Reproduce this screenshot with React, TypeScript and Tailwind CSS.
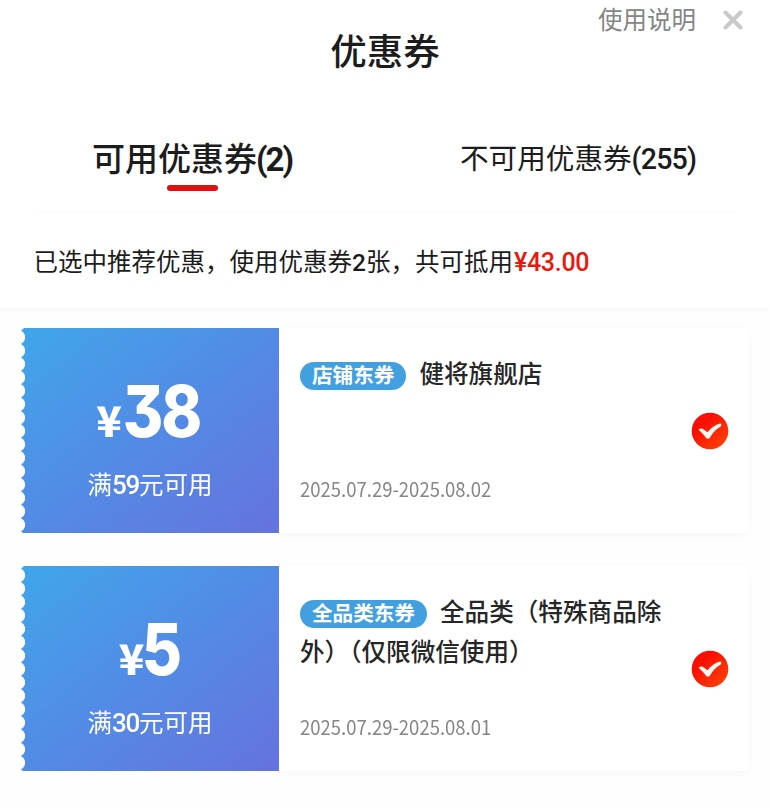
interface Coupon {
  id: number;
  amount: string;
  condition: string;
  tag: string;
  title: string;
  period: string;
}

const coupons: Coupon[] = [
  {
    id: 1,
    amount: '38',
    condition: '59',
    tag: '店铺东券',
    title: '健将旗舰店',
    period: '2025.07.29-2025.08.02',
  },
  {
    id: 2,
    amount: '5',
    condition: '30',
    tag: '全品类东券',
    title: '全品类（特殊商品除外）（仅限微信使用）',
    period: '2025.07.29-2025.08.01',
  },
];

function CheckIcon({ id }: { id: number }) {
  return (
    <svg viewBox="0 0 38 38" className="h-[38px] w-[38px]">
      <defs>
        <linearGradient id={`check-${id}`} x1="0" y1="0" x2="1" y2="1">
          <stop offset="0.3" stopColor="#fa0f05" />
          <stop offset="1" stopColor="#fd4a08" />
        </linearGradient>
      </defs>
      <circle cx="19" cy="19" r="18.3" fill={`url(#check-${id})`} />
      <path
        d="M7.6 17.8 C9 16.2 11 16 12.8 17.4 L16.6 20.2 C20.3 15.8 24 13 29 11.6 C30.4 11.8 30.8 13.2 29.8 14.6 C25.4 17 21.8 20.8 19 25.6 C17.8 27.2 16.2 27.1 15 25.8 C12.6 22.8 10.4 20.4 7.6 17.8 Z"
        fill="#fff6ee"
      />
    </svg>
  );
}

function CouponCard({ coupon }: { coupon: Coupon }) {
  return (
    <div className="flex h-[205px] w-[728px]">
      {/* Left stub with the scalloped edge */}
      <div className="flex w-[258px] shrink-0 flex-col items-center bg-linear-to-br from-[#3ea6ea] via-[#528be5] to-[#6572df] text-white [mask:radial-gradient(circle_at_-3px_50%,transparent_6.8px,#000_7.4px)_0_2.6px/100%_13.4px_repeat-y]">
        <div className="mt-[47px] ml-[2px] flex h-[72px] items-baseline font-['Inter','Noto_Sans_CJK_SC',sans-serif] leading-[72px]">
          <span className="-mr-[5px] font-['Noto_Sans_CJK_SC',sans-serif] text-[42px] font-black leading-none">¥</span>
          <span className="inline-block scale-x-[0.87] text-[71px] font-extrabold tracking-[-2.5px] [font-feature-settings:'cv09']">
            {coupon.amount}
          </span>
        </div>
        <div className="mt-[20px] text-[24.5px] leading-9">
          满<span className="text-[26px] font-medium tracking-[-1.2px]">{coupon.condition}</span>元可用
        </div>
      </div>

      {/* Details */}
      <div className="flex flex-1 items-center rounded-r-md bg-white pl-[21px] pr-5 shadow-[0_2px_8px_rgba(0,0,0,0.035)]">
        <div className="flex h-full w-[372px] flex-col justify-between pt-[27px] pb-[26px]">
          <h2 className="text-[24.6px] font-medium leading-10 text-[#262626]">
            <span className="relative -top-[3px] mr-[13px] inline-flex h-[28px] items-center rounded-full bg-[#42a0e0] px-3 align-[-3px] text-[20.6px] leading-none font-bold text-white">
              {coupon.tag}
            </span>
            {coupon.title}
          </h2>
          <div className="origin-left scale-x-[0.925] font-['Noto_Sans_CJK_SC',sans-serif] text-xl leading-9 whitespace-nowrap text-[#858585]">
            {coupon.period}
          </div>
        </div>
        <div className="ml-auto">
          <CheckIcon id={coupon.id} />
        </div>
      </div>
    </div>
  );
}

export default function App() {
  return (
    <main className="h-[807px] w-[770px] overflow-hidden bg-[#fefefe] font-['Roboto','Noto_Sans_CJK_SC',sans-serif] text-[#1c1c1c]">
      <div className="h-[308px] bg-white shadow-[0_1px_4px_rgba(0,0,0,0.04)]">
        <header className="relative flex h-[115px] justify-center">
          <h1 className="mt-[27px] text-[36.5px] font-medium leading-[52px]">优惠券</h1>
          <div className="absolute top-0 right-[27px] flex h-10 items-center gap-[27px]">
            <span className="mt-[3px] text-[24.5px] text-[#858585]">使用说明</span>
            <svg viewBox="0 0 20 20" className="h-5 w-5" stroke="#c9c9c9" strokeWidth="4" strokeLinecap="round">
              <path d="M2.5 2.5 L17.5 17.5 M17.5 2.5 L2.5 17.5" />
            </svg>
          </div>
        </header>

        {/* Tabs */}
        <nav className="mx-[34px] flex h-[98px] border-b border-[#fbfbfb]">
          <button className="ml-[58px] flex w-[200px] flex-col items-center whitespace-nowrap">
            <span className="mt-[22px] text-[33px] font-medium leading-[46px]">
              可用优惠券<span className="-ml-px font-bold tracking-[-2px]">(2)</span>
            </span>
            <span className="mt-[2px] h-[6px] w-[51px] rounded-full bg-[#e01010]" />
          </button>
          <button className="ml-[168px] flex items-start whitespace-nowrap">
            <span className="mt-[21px] text-[28.6px] leading-[46px]">
              不可用优惠券<span className="font-medium tracking-[-0.8px]">(255)</span>
            </span>
          </button>
        </nav>

        <p className="mt-[32px] ml-[33.5px] text-[24.5px] leading-9">
          已选中推荐优惠，使用优惠券<span className="font-medium">2</span>张，共可抵用
          <span className="ml-px text-[25px] font-medium tracking-[-0.3px] text-[#e8190c]">¥43.00</span>
        </p>
      </div>

      <section className="mt-5 ml-[21px] flex flex-col gap-[33px]">
        {coupons.map((coupon) => (
          <CouponCard key={coupon.id} coupon={coupon} />
        ))}
      </section>
    </main>
  );
}
